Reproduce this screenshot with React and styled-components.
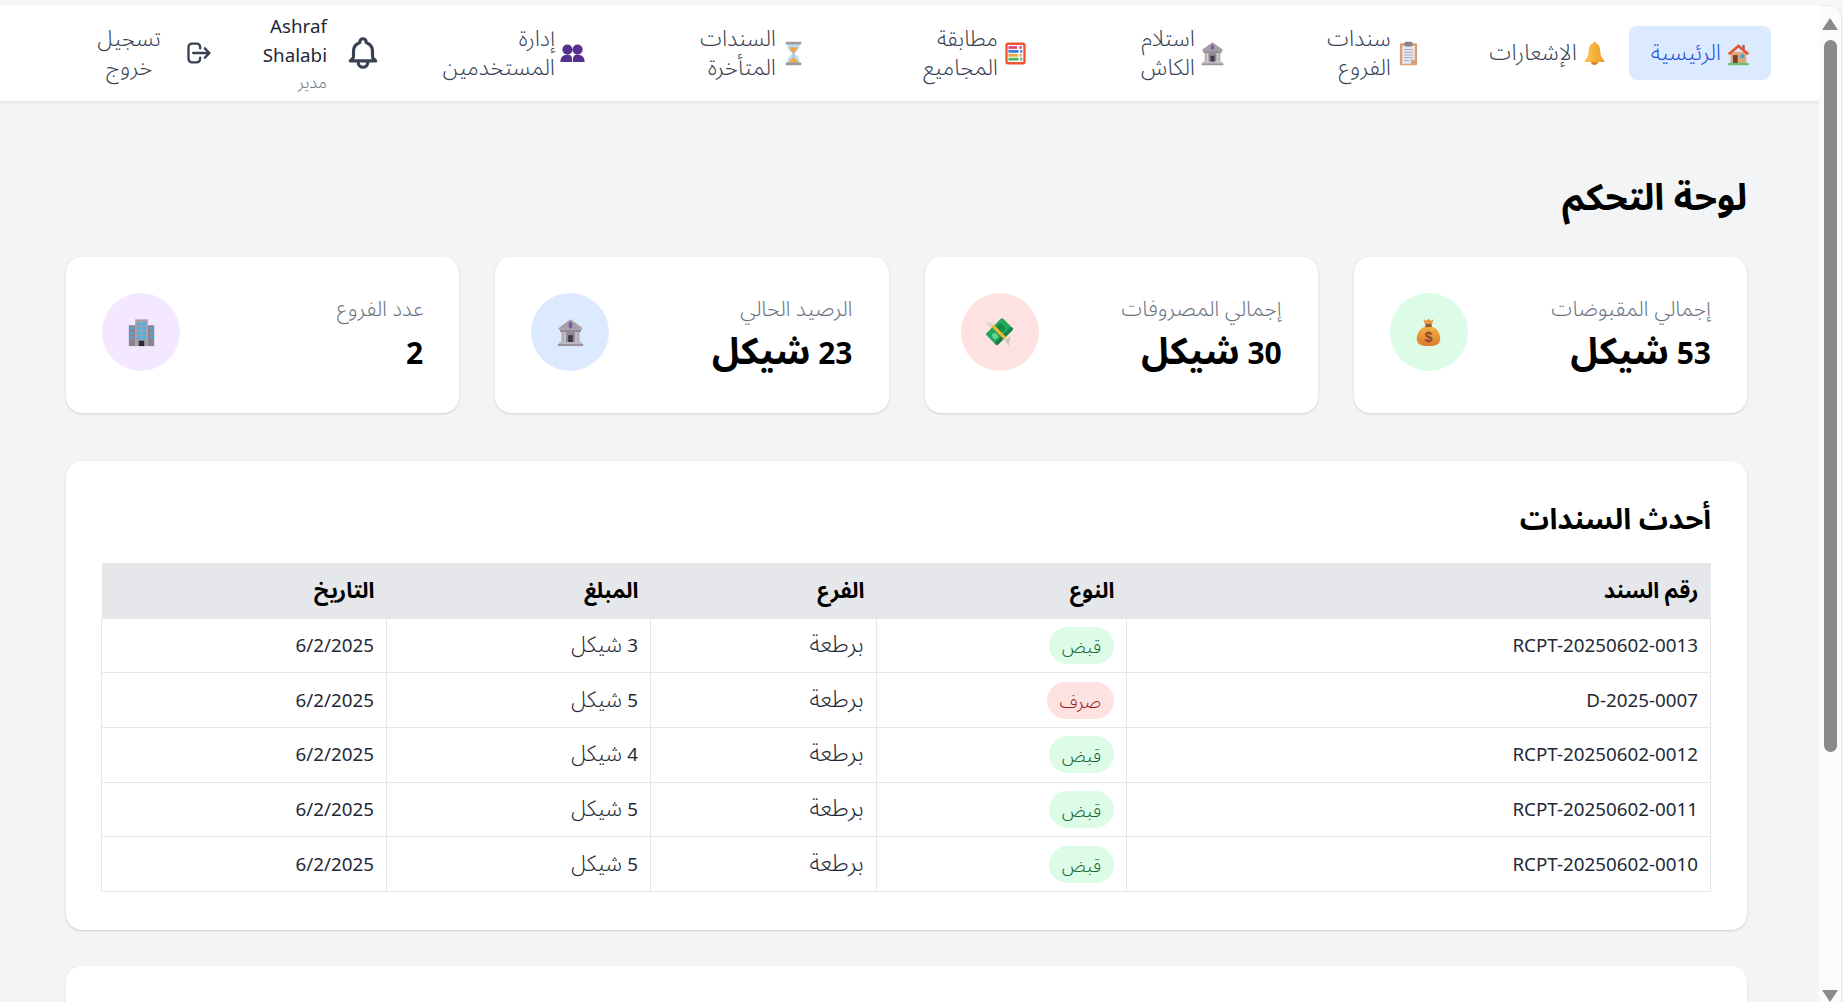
import React from 'react';
import styled, { createGlobalStyle } from 'styled-components';

const GlobalStyle = createGlobalStyle`
  * { box-sizing: border-box; }
  html, body { margin: 0; padding: 0; height: 100%; overflow: hidden; }
  body {
    background: #f7f7f7;
    font-family: "Noto Sans", "Noto Sans Arabic", "DejaVu Sans", sans-serif;
    font-size: 18.8px;
    line-height: 29px;
    color: #374151;
  }
`;

// small drawings of the colour emoji used in the page, all on a 32 box
const DRAWINGS = {
  house: (
    <>
      <rect x="6" y="14" width="20" height="15" fill="#e0a878" />
      <rect x="21" y="5" width="3" height="7" fill="#a8634a" />
      <path d="M16 4 L30 16 L27 18 L16 8.5 L5 18 L2 16 Z" fill="#e2552f" />
      <rect x="9" y="18" width="6" height="11" fill="#6d4434" />
      <rect x="18.5" y="17" width="5" height="5" fill="#3ba7dc" />
      <rect x="3" y="28" width="26" height="3" fill="#6cc070" />
    </>
  ),
  bell: (
    <>
      <defs>
        <linearGradient id="bellFill" x1="0" y1="0" x2="1" y2="0">
          <stop offset="0" stopColor="#fbc54a" />
          <stop offset="1" stopColor="#f09a2a" />
        </linearGradient>
      </defs>
      <circle cx="16" cy="3.5" r="2.2" fill="#f0a030" />
      <path d="M16 3 C10 3 9 8 8.5 14 C8.2 19 6.5 22 3.5 25 L3.5 27 L28.5 27 L28.5 25 C25.5 22 23.8 19 23.5 14 C23 8 22 3 16 3 Z" fill="url(#bellFill)" />
      <path d="M11.5 27 A4.5 3.6 0 0 0 20.5 27 Z" fill="#d9822b" />
    </>
  ),
  clipboard: (
    <>
      <rect x="5" y="3" width="22" height="28" rx="1.5" fill="#d99f70" />
      <path d="M8 6 H24 V24 L19 29 H8 Z" fill="#e9e6f1" />
      <path d="M24 24 L19 29 V24 Z" fill="#bfa0a0" />
      <rect x="11" y="1" width="10" height="6" rx="1.5" fill="#85808c" />
      <path d="M10.5 11 H21.5 M10.5 14.5 H21.5 M10.5 18 H21.5 M10.5 21.5 H21.5 M10.5 25 H17" stroke="#a9a6b4" strokeWidth="1.3" />
    </>
  ),
  bank: (
    <>
      <path d="M16 1.5 L29 11 V13 H3 V11 Z" fill="#a79fa8" />
      <ellipse cx="16" cy="8" rx="2" ry="3.6" fill="#7e55b4" />
      <rect x="4.5" y="13" width="23" height="2.5" fill="#8f8892" />
      <rect x="6" y="15.5" width="3.6" height="11" fill="#b3adb6" />
      <rect x="22.4" y="15.5" width="3.6" height="11" fill="#b3adb6" />
      <rect x="10.6" y="15.5" width="10.8" height="11" fill="#8f8892" />
      <rect x="13.5" y="19" width="5" height="7.5" fill="#3d3843" />
      <rect x="3.5" y="26.5" width="25" height="2" fill="#bdb7c0" />
      <rect x="2" y="28.5" width="28" height="2.5" fill="#9b949e" />
    </>
  ),
  abacus: (
    <>
      <rect x="3" y="2" width="26" height="28" rx="3.5" fill="#f0562f" />
      <rect x="6" y="5" width="20" height="22" rx="1" fill="#fff" />
      <rect x="7" y="6.5" width="11" height="3.6" fill="#e8457a" />
      <rect x="21" y="6.5" width="3" height="3.6" fill="#e8457a" />
      <rect x="7" y="11.5" width="13" height="3.6" fill="#3f7fd9" />
      <rect x="22" y="11.5" width="2.5" height="3.6" fill="#3f7fd9" />
      <rect x="7" y="16.5" width="12" height="3.6" fill="#f3a43a" />
      <rect x="21" y="16.5" width="3" height="3.6" fill="#f3a43a" />
      <rect x="7" y="21.5" width="13" height="3.6" fill="#48b860" />
      <rect x="22" y="21.5" width="2.5" height="3.6" fill="#48b860" />
    </>
  ),
  hourglass: (
    <>
      <path d="M8 4 H24 C24 11 19.5 13.5 17.5 16 C19.5 18.5 24 21 24 28 H8 C8 21 12.5 18.5 14.5 16 C12.5 13.5 8 11 8 4 Z" fill="#bcdcf2" />
      <path d="M10.5 8 H21.5 C20.5 12 17.5 13.5 16 16 C14.5 13.5 11.5 12 10.5 8 Z" fill="#e9a44a" />
      <path d="M15.3 16 H16.7 V22 H15.3 Z" fill="#e9a44a" />
      <path d="M10 28 C11 24 14 22 16 21.5 C18 22 21 24 22 28 Z" fill="#eeab52" />
      <rect x="6" y="1" width="20" height="3.5" rx="1" fill="#9b9aa3" />
      <rect x="6" y="27.5" width="20" height="3.5" rx="1" fill="#9b9aa3" />
    </>
  ),
  users: (
    <>
      <circle cx="9.5" cy="11" r="6.5" fill="#55308d" />
      <circle cx="22.5" cy="11" r="6.5" fill="#55308d" />
      <path d="M0.5 27 C0.5 21 3.5 17.5 9.5 17.5 C15.5 17.5 15.5 21 15.5 27 Z" fill="#55308d" />
      <path d="M16.5 27 C16.5 21 16.5 17.5 22.5 17.5 C28.5 17.5 31.5 21 31.5 27 Z" fill="#55308d" />
    </>
  ),
  moneybag: (
    <>
      <defs>
        <linearGradient id="bagFill" x1="0" y1="0" x2="0" y2="1">
          <stop offset="0" stopColor="#f6b23e" />
          <stop offset="1" stopColor="#dc7a2e" />
        </linearGradient>
      </defs>
      <path d="M16 9 C7 9 3 17 3 23 C3 29 8 31 16 31 C24 31 29 29 29 23 C29 17 25 9 16 9 Z" fill="url(#bagFill)" />
      <rect x="12.5" y="6" width="7" height="4" fill="#8e5a3a" />
      <path d="M10.5 1.5 L13.5 3 L16 0.8 L18.5 3 L21.5 1.5 L20 6.5 H12 Z" fill="#e5973a" />
      <text x="16" y="27" textAnchor="middle" fontSize="16" fontWeight="700" fontFamily="Liberation Sans, sans-serif" fill="#8a4a30">$</text>
    </>
  ),
  money: (
    <>
      <path d="M10 6 L1 4 L6 12 Z" fill="#d9d6d6" />
      <path d="M22 24 L26 31 L28 20 Z" fill="#c9c6c8" />
      <g transform="rotate(-45 16 15)">
        <rect x="3" y="6" width="26" height="18" rx="2" fill="#25a85a" />
        <rect x="3" y="20" width="26" height="4" rx="1.5" fill="#188146" />
        <ellipse cx="20" cy="13" rx="4" ry="4.5" fill="#138a46" />
        <ellipse cx="9" cy="15" rx="3" ry="3.5" fill="#6fd093" />
        <rect x="13.5" y="5" width="3.4" height="20" fill="#f7b52e" />
      </g>
    </>
  ),
  building: (
    <>
      <rect x="9" y="1.5" width="14" height="29.5" fill="#a7a0ab" />
      <rect x="2" y="8" width="7" height="23" fill="#8a8491" />
      <rect x="23" y="8" width="7" height="23" fill="#8a8491" />
      {[5, 10, 15, 20].map((y) => (
        <g key={y} fill="#39b5f2">
          <rect x="11" y={y} width="4" height="3.4" />
          <rect x="17" y={y} width="4" height="3.4" />
          <rect x="3.5" y={y + 5} width="2.6" height="2.6" opacity={y === 20 ? 0 : 1} />
          <rect x="26" y={y + 5} width="2.6" height="2.6" opacity={y === 20 ? 0 : 1} />
        </g>
      ))}
      <rect x="13" y="25" width="6" height="6" fill="#2d2933" />
    </>
  ),
};

const NAV_ITEMS = [
  { icon: 'bell', lines: ['الإشعارات'], width: 186 },
  { icon: 'clipboard', lines: ['سندات', 'الفروع'], width: 196 },
  { icon: 'bank', lines: ['استلام', 'الكاش'], width: 197 },
  { icon: 'abacus', lines: ['مطابقة', 'المجاميع'], width: 222 },
  { icon: 'hourglass', lines: ['السندات', 'المتأخرة'], width: 221 },
  { icon: 'users', lines: ['إدارة', 'المستخدمين'], width: 214 },
];

const STATS = [
  { label: 'إجمالي المقبوضات', number: '53', unit: 'شيكل', icon: 'moneybag', tint: '#dcfce7' },
  { label: 'إجمالي المصروفات', number: '30', unit: 'شيكل', icon: 'money', tint: '#fee2e2' },
  { label: 'الرصيد الحالي', number: '23', unit: 'شيكل', icon: 'bank', tint: '#dbeafe' },
  { label: 'عدد الفروع', number: '2', icon: 'building', tint: '#f3e8ff' },
];

const RECEIPTS = [
  { id: 'RCPT-20250602-0013', type: 'قبض', amount: '3' },
  { id: 'D-2025-0007', type: 'صرف', amount: '5' },
  { id: 'RCPT-20250602-0012', type: 'قبض', amount: '4' },
  { id: 'RCPT-20250602-0011', type: 'قبض', amount: '5' },
  { id: 'RCPT-20250602-0010', type: 'قبض', amount: '5' },
];

const COLUMNS = [
  { title: 'رقم السند', width: 584 },
  { title: 'النوع', width: 250 },
  { title: 'الفرع', width: 226 },
  { title: 'المبلغ', width: 264 },
  { title: 'التاريخ', width: 285 },
];

const Drawing = ({ name, size = 25 }) => (
  <EmojiSvg viewBox="0 0 32 32" $size={size}>{DRAWINGS[name]}</EmojiSvg>
);

const App = () => (
  <>
    <GlobalStyle />
    <Frame>
      <Main dir="rtl">
        <Nav>
          <HomeLink><Drawing name="house" /><NavText>الرئيسية</NavText></HomeLink>
          {NAV_ITEMS.map((item) => (
            <NavLink key={item.icon} $width={item.width}>
              <Drawing name={item.icon} />
              <NavText>{item.lines.map((line) => <Line key={line}>{line}</Line>)}</NavText>
            </NavLink>
          ))}
          <BellIcon viewBox="0 0 24 24" fill="none" stroke="currentColor" strokeWidth="2" strokeLinecap="round" strokeLinejoin="round">
            <path d="M15 17h5l-1.405-1.405A2.032 2.032 0 0118 14.158V11a6.002 6.002 0 00-4-5.659V5a2 2 0 10-4 0v.341C7.67 6.165 6 8.388 6 11v3.159c0 .538-.214 1.055-.595 1.436L4 17h5m6 0v1a3 3 0 11-6 0v-1m6 0H9" />
          </BellIcon>
          <UserBox>
            <UserName>Ashraf Shalabi</UserName>
            <UserRole>مدير</UserRole>
          </UserBox>
          <Logout>
            <LogoutIcon viewBox="0 0 24 24" fill="none" stroke="currentColor" strokeWidth="2" strokeLinecap="round" strokeLinejoin="round">
              <path d="M17 16l4-4m0 0l-4-4m4 4H7m6 4v1a3 3 0 01-3 3H6a3 3 0 01-3-3V7a3 3 0 013-3h4a3 3 0 013 3v1" />
            </LogoutIcon>
            <LogoutText><Line>تسجيل</Line><Line>خروج</Line></LogoutText>
          </Logout>
        </Nav>
        <Content>
          <Title>لوحة التحكم</Title>
          <StatGrid>
            {STATS.map((stat) => (
              <StatCard key={stat.label}>
                <div>
                  <StatLabel>{stat.label}</StatLabel>
                  <StatValue>{stat.number} {stat.unit && <StatUnit>{stat.unit}</StatUnit>}</StatValue>
                </div>
                <StatCircle $tint={stat.tint}><Drawing name={stat.icon} size={29} /></StatCircle>
              </StatCard>
            ))}
          </StatGrid>
          <Panel>
            <PanelTitle>أحدث السندات</PanelTitle>
            <Table>
              <colgroup>
                {COLUMNS.map((col) => <col key={col.title} width={col.width} />)}
              </colgroup>
              <thead>
                <tr>{COLUMNS.map((col) => <Th key={col.title}>{col.title}</Th>)}</tr>
              </thead>
              <tbody>
                {RECEIPTS.map((row) => (
                  <tr key={row.id}>
                    <Td>{row.id}</Td>
                    <Td><Badge $expense={row.type === 'صرف'}>{row.type}</Badge></Td>
                    <Td><CellWord $size={24}>برطعة</CellWord></Td>
                    <Td>{row.amount} <CellWord $size={22}>شيكل</CellWord></Td>
                    <Td>6/2/2025</Td>
                  </tr>
                ))}
              </tbody>
            </Table>
          </Panel>
          <EmptyPanel />
        </Content>
      </Main>
      <ScrollBar>
        <ArrowUp />
        <Thumb />
        <ArrowDown />
      </ScrollBar>
    </Frame>
  </>
);

export default App;

const Frame = styled.div`
  height: 100vh;
  padding: 5px 1px 0 0;
  display: flex;
  overflow: hidden;
  background: #f7f7f7;
`;
const Main = styled.div`
  flex: 1;
  min-width: 0;
  background: #f3f4f6;
  overflow: hidden;
`;
const Nav = styled.nav`
  height: 96px;
  padding-right: 48px;
  display: flex;
  align-items: center;
  background: #fff;
  box-shadow: 0 1px 3px rgba(0, 0, 0, 0.1);
  position: relative;
`;
const Line = styled.span`
  display: block;
`;
const NavText = styled.span`
  padding-bottom: 3px;
  font-size: 22.5px;
  font-weight: 300;
`;
const CellWord = styled.span`
  font-size: ${(p) => p.$size}px;
  font-weight: 300;
  line-height: 0;
`;
const EmojiSvg = styled.svg`
  width: ${(p) => p.$size}px;
  height: ${(p) => p.$size}px;
  flex-shrink: 0;
`;
const HomeLink = styled.a`
  width: 142px;
  height: 54px;
  margin-left: 6px;
  padding: 0 20px 0 0;
  display: flex;
  align-items: center;
  gap: 5px;
  flex-shrink: 0;
  border-radius: 8px;
  background: #dbeafe;
  color: #1d4ed8;
`;
const NavLink = styled.a`
  width: ${(p) => p.$width}px;
  padding: 0 16px;
  display: flex;
  align-items: center;
  gap: 5px;
  flex-shrink: 0;
`;
const BellIcon = styled.svg`
  width: 38px;
  height: 38px;
  margin-right: 5px;
  flex-shrink: 0;
`;
const UserBox = styled.div`
  width: 66px;
  margin-right: 17px;
  flex-shrink: 0;
`;
const UserName = styled.div`
  color: #1f2937;
`;
const UserRole = styled.div`
  color: #6b7280;
  font-size: 17px;
  font-weight: 300;
  line-height: 24px;
`;
const Logout = styled.a`
  margin-right: 48px;
  display: flex;
  align-items: center;
  gap: 24px;
`;
const LogoutIcon = styled.svg`
  width: 28px;
  height: 28px;
  flex-shrink: 0;
`;
const LogoutText = styled.span`
  padding-bottom: 3px;
  text-align: center;
  font-size: 22.5px;
  font-weight: 300;
`;
const Content = styled.main`
  padding: 71px 72px 0 66px;
`;
const Title = styled.h1`
  margin: 0 0 37px;
  font-size: 36.5px;
  line-height: 48px;
  font-weight: 700;
  color: #000;
`;
const StatGrid = styled.div`
  display: grid;
  grid-template-columns: repeat(4, 1fr);
  gap: 36px;
  margin-bottom: 48px;
`;
const StatCard = styled.div`
  height: 156px;
  padding: 36px;
  display: flex;
  align-items: flex-start;
  justify-content: space-between;
  background: #fff;
  border-radius: 16px;
  box-shadow: 0 1px 3px rgba(0, 0, 0, 0.1), 0 1px 2px rgba(0, 0, 0, 0.06);
`;
const StatLabel = styled.div`
  color: #6b7280;
  font-size: 21.5px;
  font-weight: 300;
  line-height: 29px;
`;
const StatValue = styled.div`
  margin-top: 7px;
  color: #000;
  font-size: 30px;
  line-height: 48px;
  font-weight: 700;
`;
const StatUnit = styled.span`
  font-size: 37px;
  line-height: 0;
`;
const StatCircle = styled.div`
  width: 78px;
  height: 78px;
  display: flex;
  align-items: center;
  justify-content: center;
  border-radius: 50%;
  background: ${(p) => p.$tint};
`;
const Panel = styled.section`
  height: 469px;
  padding: 36px;
  margin-bottom: 36px;
  background: #fff;
  border-radius: 16px;
  box-shadow: 0 1px 3px rgba(0, 0, 0, 0.1), 0 1px 2px rgba(0, 0, 0, 0.06);
`;
const PanelTitle = styled.h2`
  margin: 0 0 24px;
  font-size: 29px;
  line-height: 42px;
  font-weight: 700;
  color: #000;
`;
const Table = styled.table`
  width: 100%;
  table-layout: fixed;
  border-collapse: collapse;
  color: #1f2937;
`;
const Th = styled.th`
  height: 55px;
  padding: 0 12px 2px;
  text-align: right;
  font-size: 21.8px;
  font-weight: 700;
  color: #000;
  background: #e5e7eb;
`;
const Td = styled.td`
  height: 54.7px;
  padding: 0 12px;
  text-align: right;
  border: 1px solid #e5e7eb;
`;
const Badge = styled.span`
  display: inline-flex;
  align-items: center;
  height: 37px;
  padding: 0 13px;
  border-radius: 999px;
  font-size: 18.4px;
  font-weight: 300;
  background: ${(p) => (p.$expense ? '#fee2e2' : '#dcfce7')};
  color: ${(p) => (p.$expense ? '#991b1b' : '#166534')};
`;
const EmptyPanel = styled.section`
  height: 200px;
  background: #fff;
  border-radius: 16px;
  box-shadow: 0 1px 3px rgba(0, 0, 0, 0.1);
`;
const ScrollBar = styled.div`
  width: 23px;
  flex-shrink: 0;
  display: flex;
  flex-direction: column;
  align-items: center;
  padding-top: 12px;
  background: #fbfbfb;
  border-right: 1px solid #e6e6e6;
  border-top: 1px solid #ececec;
  border-top-right-radius: 12px;
`;
const ArrowUp = styled.div`
  width: 0;
  height: 0;
  border-left: 8px solid transparent;
  border-right: 8px solid transparent;
  border-bottom: 12px solid #8a8a8a;
`;
const Thumb = styled.div`
  width: 13px;
  height: 715px;
  margin-top: 10px;
  border-radius: 7px;
  background: #8a8a8a;
`;
const ArrowDown = styled.div`
  width: 0;
  height: 0;
  margin-top: 238px;
  border-left: 8px solid transparent;
  border-right: 8px solid transparent;
  border-top: 12px solid #8a8a8a;
`;
